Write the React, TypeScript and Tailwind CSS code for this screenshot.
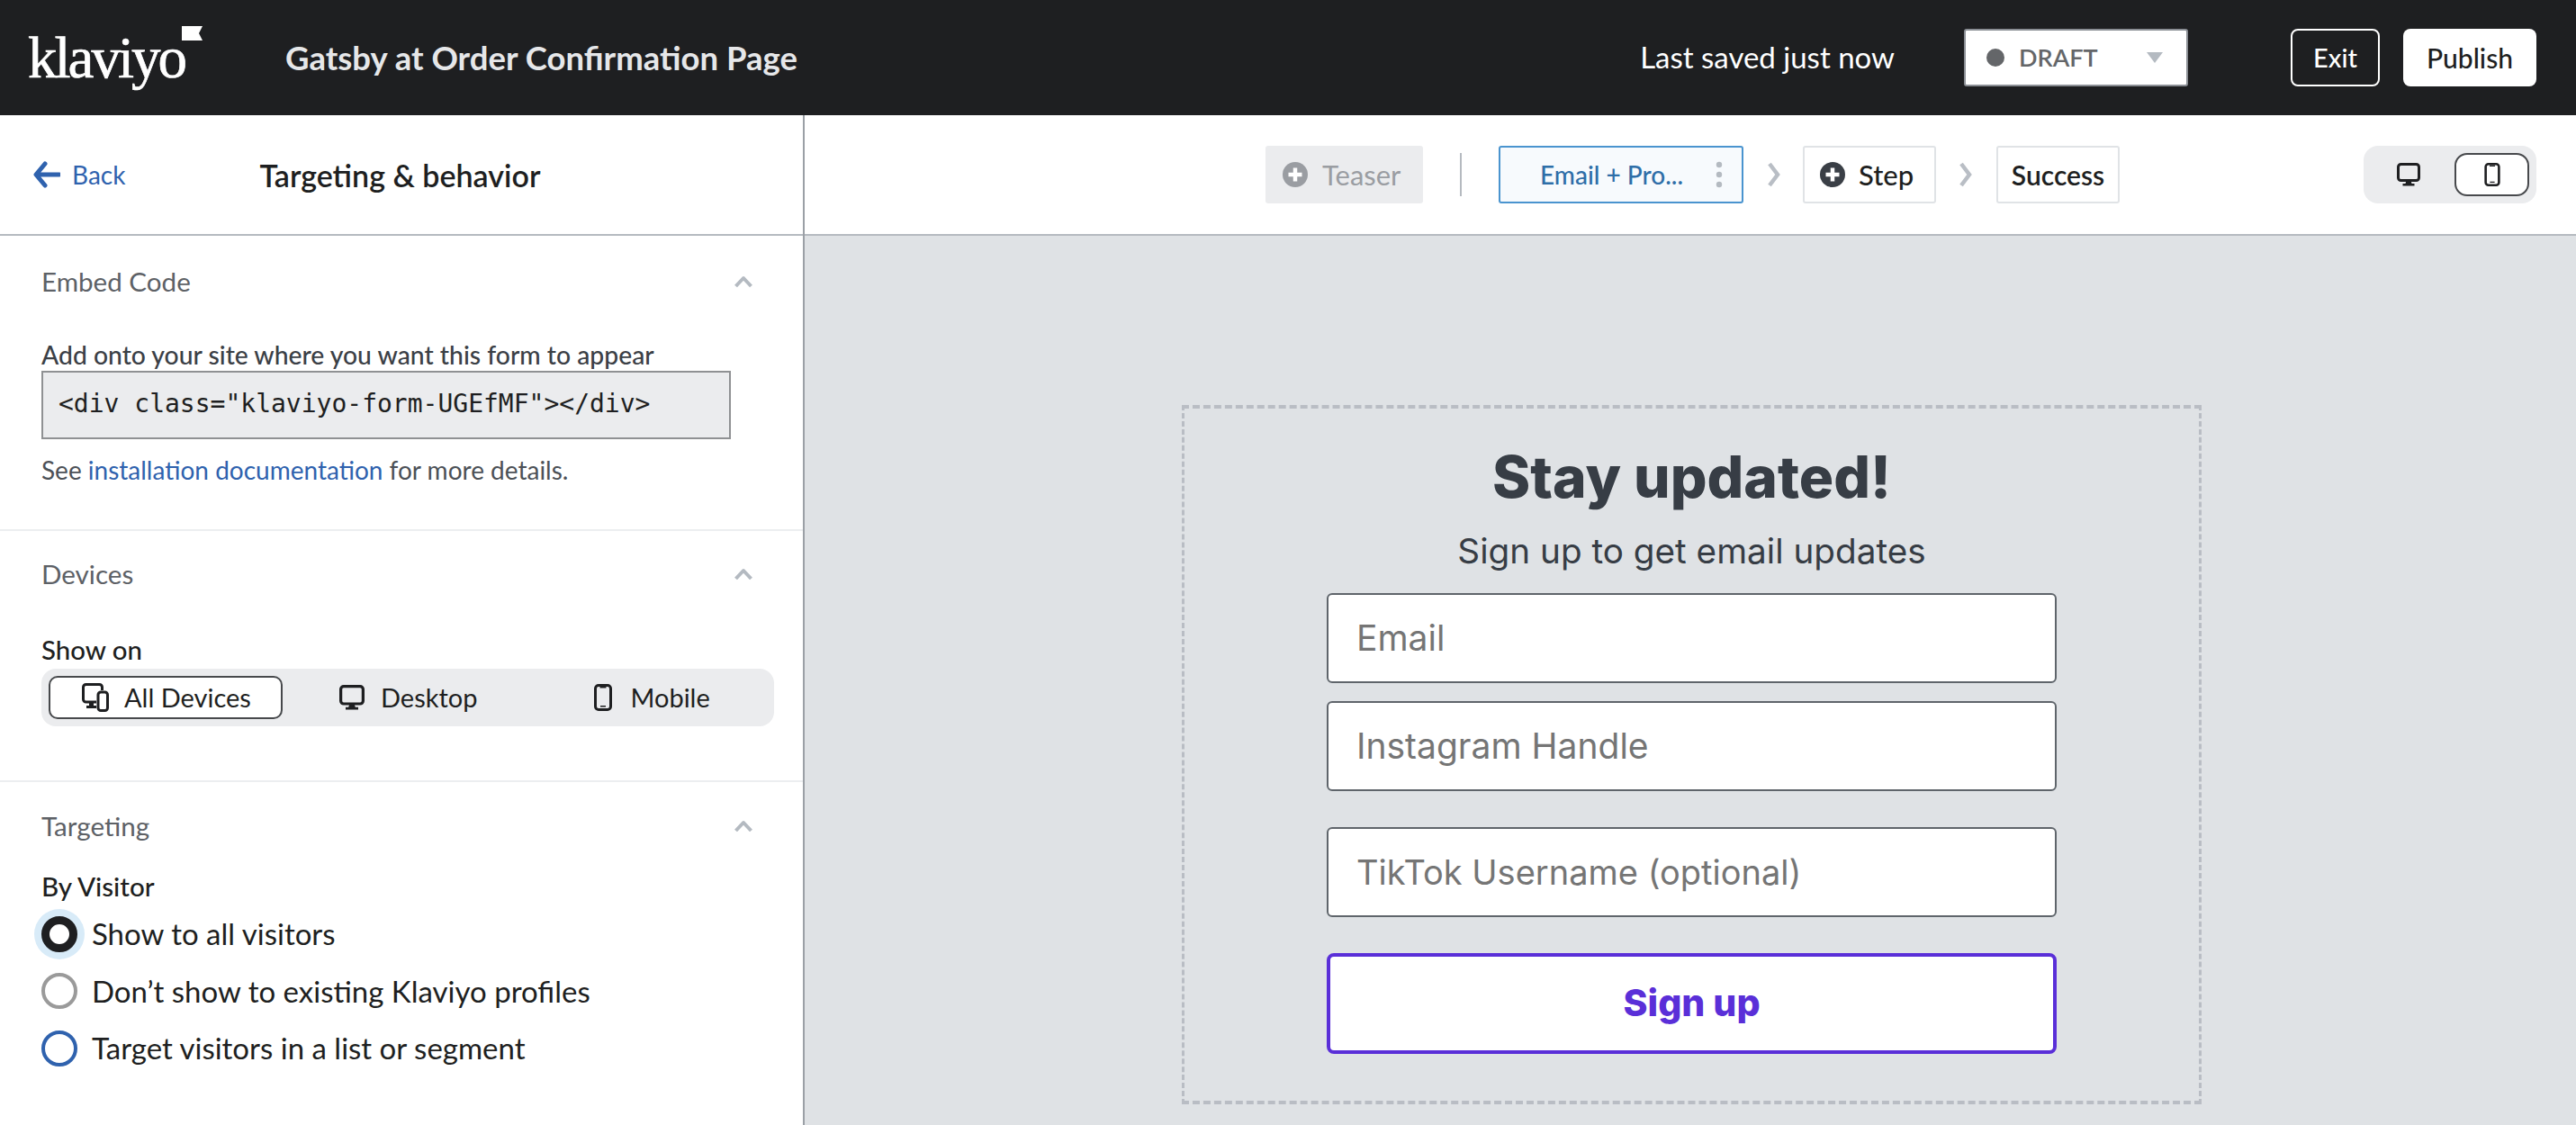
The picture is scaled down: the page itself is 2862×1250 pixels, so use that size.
const ui = "font-['Lato','Liberation_Sans',sans-serif]";
const form = "font-['Inter','Open_Sans',sans-serif]";

function Plus({ className }: { className: string }) {
  return (
    <svg viewBox="0 0 28 28" className={className}>
      <circle cx="14" cy="14" r="14" fill="currentColor" />
      <path d="M14 6.5v15M6.5 14h15" stroke="#fff" strokeWidth="4.5" />
    </svg>
  );
}

function Caret() {
  return (
    <svg viewBox="0 0 22 14" className="h-[14px] w-[22px] text-[#b4bac1]">
      <path d="M2.5 12 11 3l8.5 9" fill="none" stroke="currentColor" strokeWidth="4" strokeLinejoin="round" />
    </svg>
  );
}

function StepArrow() {
  return (
    <svg viewBox="0 0 16 28" className="h-[28px] w-[16px] text-[#b9bec5]">
      <path d="M3 2l9 12-9 12" fill="none" stroke="currentColor" strokeWidth="4.5" />
    </svg>
  );
}

function Desktop({ className }: { className: string }) {
  return (
    <svg viewBox="0 0 26 26" className={className}>
      <rect x="1.5" y="1.5" width="23" height="18" rx="3" fill="none" stroke="#1e1f21" strokeWidth="3" />
      <path d="M10.5 19.5h5l1 3.5h3v2.5h-13V23h3z" fill="#1e1f21" />
    </svg>
  );
}

function Mobile({ className }: { className: string }) {
  return (
    <svg viewBox="0 0 20 30" className={className}>
      <rect x="1.5" y="1.5" width="17" height="27" rx="3.5" fill="none" stroke="#1e1f21" strokeWidth="3" />
      <path d="M6.5 3h7v1.5h-7zM7 24h6v1.5H7z" fill="#1e1f21" />
    </svg>
  );
}

function AllDevices() {
  return (
    <svg viewBox="0 0 30 32" className="h-[32px] w-[30px]">
      <path d="M16 21H4.5a3 3 0 0 1-3-3V4.5a3 3 0 0 1 3-3h15a3 3 0 0 1 3 3V8" fill="none" stroke="#1e1f21" strokeWidth="3" />
      <rect x="18" y="10" width="10.5" height="20.5" rx="3" fill="none" stroke="#1e1f21" strokeWidth="3" />
      <path d="M8 21h5v4h3v3H5v-3h3z" fill="#1e1f21" />
    </svg>
  );
}

function SectionHead({ title }: { title: string }) {
  return (
    <div className="flex h-[36px] items-center justify-between pr-[55px]">
      <span className="text-[29.6px] text-[#5d6166]">{title}</span>
      <Caret />
    </div>
  );
}

function Radio({ state, label }: { state: "on" | "off" | "hover"; label: string }) {
  const ring =
    state === "on"
      ? "border-[9px] border-[#1e1f21] shadow-[0_0_0_8px_#d8ebf8]"
      : state === "off"
        ? "border-[4px] border-[#9a9a9a]"
        : "border-[4px] border-[#2f62ae]";
  return (
    <div className="flex h-[63.5px] items-center gap-[16px]">
      <span className={`h-[40px] w-[40px] rounded-full bg-white ${ring}`} />
      <span className="text-[33px] text-[#1e1f21]">{label}</span>
    </div>
  );
}

function Field({ label, size = "text-[39px]" }: { label: string; size?: string }) {
  return (
    <div className={`flex h-[100px] w-[811px] items-center rounded-[6px] border-2 border-[#5f656b] bg-white pl-[31px] text-[#757575] ${size}`}>
      {label}
    </div>
  );
}

export default function App() {
  return (
    <div className={`flex h-[1250px] w-[2862px] flex-col overflow-hidden bg-white ${ui}`}>
      <header className="flex h-[128px] shrink-0 items-center bg-[#1e1f21]">
        <div className="relative ml-[31px] w-[286px]">
          <span className="font-['Liberation_Serif',serif] text-[65px] leading-none tracking-[-3px] text-white [-webkit-text-stroke:0.7px_white]">klaviyo</span>
          <svg viewBox="0 0 23 16" className="absolute left-[171px] top-[-3px] h-[16px] w-[23px]">
            <path d="M0 0h23l-4 8 4 8H0z" fill="#fff" />
          </svg>
        </div>
        <h1 className="text-[36.5px] font-bold text-[#e6e7e9]">Gatsby at Order Confirmation Page</h1>
        <span className="ml-auto text-[33px] text-white">Last saved just now</span>
        <div className="ml-[77px] flex h-[64px] w-[249px] items-center rounded-[3px] border-2 border-[#8b8f95] bg-white pl-[23px] pr-[26px]">
          <span className="h-[20px] w-[20px] rounded-full bg-[#646669]" />
          <span className="ml-[16px] text-[27px] font-semibold text-[#646669]">DRAFT</span>
          <svg viewBox="0 0 18 12" className="ml-auto h-[12px] w-[18px]">
            <path d="M0 0h18l-9 12z" fill="#b4bac1" />
          </svg>
        </div>
        <button className="ml-[114px] h-[64px] w-[99px] rounded-[8px] border-2 border-white text-[29px] font-medium text-white">Exit</button>
        <button className="ml-[26px] mr-[44px] h-[64px] w-[148px] rounded-[8px] bg-white text-[30px] font-medium text-[#1e1f21]">Publish</button>
      </header>

      <div className="flex min-h-0 flex-1">
        <aside className="w-[894px] shrink-0 border-r-2 border-[#9ba0a6] bg-white">
          <div className="flex h-[134px] items-center border-b-2 border-[#b5bac0]">
            <svg viewBox="0 0 30 30" className="ml-[37px] h-[30px] w-[30px] text-[#2f62ae]">
              <path d="M13 3 3 15l10 12M4 15h25" fill="none" stroke="currentColor" strokeWidth="5" strokeLinecap="round" strokeLinejoin="round" />
            </svg>
            <span className="ml-[13px] text-[28px] text-[#2f62ae]">Back</span>
            <span className="ml-[149px] text-[34px] font-semibold text-[#1e1f21]">Targeting &amp; behavior</span>
          </div>

          <section className="border-b-2 border-[#eceef0] pb-[48px] pl-[46px] pt-[33px]">
            <SectionHead title="Embed Code" />
            <p className="mt-[45px] text-[28.3px] font-medium leading-[36px] text-[#3b4046]">Add onto your site where you want this form to appear</p>
            <div className="flex h-[76px] w-[766px] items-center border-2 border-[#8f9193] bg-[#ebecee] pb-[2px] pl-[17px] font-['DejaVu_Sans_Mono',monospace] text-[28px] text-[#1e1f21]">
              {'<div class="klaviyo-form-UGEfMF"></div>'}
            </div>
            <p className="mt-[16px] text-[28px] leading-[36px] text-[#4c5157]">
              See <span className="text-[#2f62ae]">installation documentation</span> for more details.
            </p>
          </section>

          <section className="border-b-2 border-[#eceef0] pb-[60px] pl-[46px] pt-[30px]">
            <SectionHead title="Devices" />
            <p className="mt-[48px] text-[29.4px] font-medium leading-[36px] text-[#1e1f21]">Show on</p>
            <div className="mt-[3px] flex h-[64px] w-[814px] items-center rounded-[16px] bg-[#ebecee] pl-[8px] text-[29px] text-[#1e1f21]">
              <div className="flex h-[48px] w-[260px] items-center rounded-[10px] border-2 border-[#47494c] bg-white pl-[35px]">
                <AllDevices />
                <span className="ml-[17px]">All Devices</span>
              </div>
              <Desktop className="ml-[63px] h-[28px] w-[28px]" />
              <span className="ml-[18px]">Desktop</span>
              <Mobile className="ml-[130px] h-[30px] w-[20px]" />
              <span className="ml-[20px]">Mobile</span>
            </div>
          </section>

          <section className="pl-[46px] pt-[31px]">
            <SectionHead title="Targeting" />
            <p className="mt-[31px] text-[29.6px] font-medium leading-[36px] text-[#1e1f21]">By Visitor</p>
            <div className="mt-[3px] flex flex-col">
              <Radio state="on" label="Show to all visitors" />
              <Radio state="off" label="Don’t show to existing Klaviyo profiles" />
              <Radio state="hover" label="Target visitors in a list or segment" />
            </div>
          </section>
        </aside>

        <main className="flex min-w-0 flex-1 flex-col">
          <div className="flex h-[134px] shrink-0 items-center border-b-2 border-[#b5bac0] bg-white text-[31px]">
            <div className="ml-[512px] flex h-[64px] w-[175px] items-center rounded-[3px] bg-[#ebecee] pl-[19px] text-[#9a9da2]">
              <Plus className="h-[28px] w-[28px] text-[#9a9da2]" />
              <span className="ml-[16px]">Teaser</span>
            </div>
            <div className="ml-[41px] h-[48px] w-[2px] bg-[#b5bac0]" />
            <div className="ml-[41px] flex h-[64px] w-[272px] items-center rounded-[3px] border-2 border-[#4a94cf] bg-[#f7fafd] pl-[44px] text-[28px] font-medium text-[#2e6ea8]">
              <span>Email + Pro...</span>
              <svg viewBox="0 0 8 30" className="ml-auto mr-[21px] h-[30px] w-[8px]">
                <circle cx="4" cy="4" r="3.2" fill="#b4bac1" />
                <circle cx="4" cy="15" r="3.2" fill="#b4bac1" />
                <circle cx="4" cy="26" r="3.2" fill="#b4bac1" />
              </svg>
            </div>
            <div className="ml-[26px]"><StepArrow /></div>
            <div className="ml-[24px] flex h-[64px] w-[148px] items-center rounded-[3px] border-2 border-[#e0e3e6] pl-[17px] font-medium text-[#1e1f21]">
              <Plus className="h-[28px] w-[28px] text-[#3a3f46]" />
              <span className="ml-[15px]">Step</span>
            </div>
            <div className="ml-[25px]"><StepArrow /></div>
            <div className="ml-[26px] flex h-[64px] w-[137px] items-center justify-center rounded-[3px] border-2 border-[#e0e3e6] text-[30px] font-semibold text-[#1e1f21]">Success</div>
            <div className="ml-auto mr-[44px] flex h-[64px] w-[192px] items-center rounded-[16px] bg-[#ebecee] pl-[37px]">
              <Desktop className="h-[26px] w-[26px]" />
              <div className="ml-[38px] flex h-[48px] w-[83px] items-center justify-center rounded-[14px] border-2 border-[#47494c] bg-white">
                <Mobile className="h-[26px] w-[18px]" />
              </div>
            </div>
          </div>

          <div className="flex-1 bg-[#dfe2e5] pl-[419px] pt-[188px]">
            <div className={`flex h-[777px] w-[1133px] flex-col items-center border-x-[3px] border-y-4 border-dashed border-[#b9bdc4] pt-[40px] ${form}`}>
              <h2 className="text-[64px] font-extrabold leading-[72px] text-[#373d45]">Stay updated!</h2>
              <p className="mt-[24px] text-[38.7px] leading-[44px] text-[#373d45]">Sign up to get email updates</p>
              <div className="mt-[25px] flex flex-col gap-[20px]">
                <Field label="Email" />
                <Field label="Instagram Handle" />
                <div className="mt-[20px]"><Field label="TikTok Username (optional)" size="text-[38px]" /></div>
                <button className="mt-[20px] h-[112px] w-[811px] rounded-[8px] border-4 border-[#5a2fd8] bg-white text-[41px] font-extrabold text-[#5a2fd8]">Sign up</button>
              </div>
            </div>
          </div>
        </main>
      </div>
    </div>
  );
}
